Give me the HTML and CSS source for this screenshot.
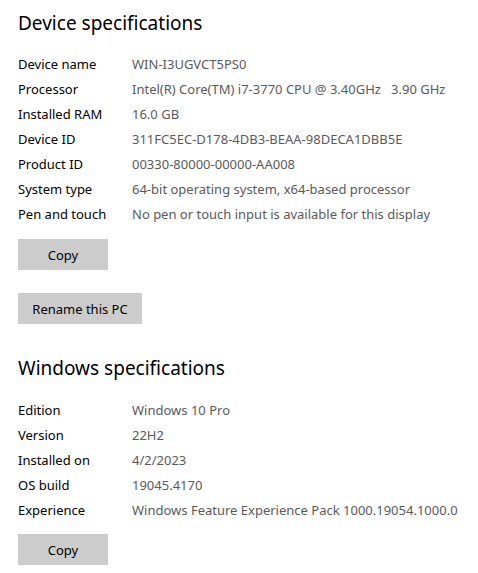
FILE: index.html
```html
<!DOCTYPE html>
<html lang="en">
<head>
  <meta charset="UTF-8">
  <title>About</title>
  <link rel="stylesheet" href="styles.css">
</head>
<body>
  <section class="spec-section">
    <h2 class="spec-title">Device specifications</h2>
    <div class="spec-list">
      <div class="spec-row"><span class="spec-label">Device name</span><span class="spec-value">WIN-I3UGVCT5PS0</span></div>
      <div class="spec-row"><span class="spec-label">Processor</span><span class="spec-value">Intel(R) Core(TM) i7-3770 CPU @ 3.40GHz &nbsp; 3.90 GHz</span></div>
      <div class="spec-row"><span class="spec-label">Installed RAM</span><span class="spec-value">16.0 GB</span></div>
      <div class="spec-row"><span class="spec-label">Device ID</span><span class="spec-value">311FC5EC-D178-4DB3-BEAA-98DECA1DBB5E</span></div>
      <div class="spec-row"><span class="spec-label">Product ID</span><span class="spec-value">00330-80000-00000-AA008</span></div>
      <div class="spec-row"><span class="spec-label">System type</span><span class="spec-value">64-bit operating system, x64-based processor</span></div>
      <div class="spec-row"><span class="spec-label">Pen and touch</span><span class="spec-value">No pen or touch input is available for this display</span></div>
    </div>
    <button class="btn btn-copy">Copy</button>
    <button class="btn btn-rename">Rename this PC</button>
  </section>

  <section class="spec-section windows">
    <h2 class="spec-title">Windows specifications</h2>
    <div class="spec-list">
      <div class="spec-row"><span class="spec-label">Edition</span><span class="spec-value">Windows 10 Pro</span></div>
      <div class="spec-row"><span class="spec-label">Version</span><span class="spec-value">22H2</span></div>
      <div class="spec-row"><span class="spec-label">Installed on</span><span class="spec-value">4/2/2023</span></div>
      <div class="spec-row"><span class="spec-label">OS build</span><span class="spec-value">19045.4170</span></div>
      <div class="spec-row"><span class="spec-label">Experience</span><span class="spec-value">Windows Feature Experience Pack 1000.19054.1000.0</span></div>
    </div>
    <button class="btn btn-copy">Copy</button>
  </section>
</body>
</html>
```

FILE: styles.css
```css
body {
  margin: 0;
  padding: 0 0 0 18px;
  background-color: white;
  color: black;
  font-family: "Noto Sans", sans-serif;
}
.spec-section {
  display: flex;
  flex-direction: column;
  align-items: flex-start;
  padding-top: 9px;
}
.spec-section.windows {
  padding-top: 30px;
}
.spec-title {
  margin: 0;
  font-size: 19px;
  font-weight: normal;
  line-height: 28px;
}
.spec-list {
  display: flex;
  flex-direction: column;
  margin-top: 14px;
}
.windows .spec-list {
  margin-top: 15px;
}
.spec-row {
  display: flex;
  height: 25px;
  align-items: center;
  font-size: 13px;
}
.spec-label {
  width: 114px;
}
.spec-value {
  color: #5a5a5a;
}
.btn {
  border: none;
  background-color: #cccccc;
  color: black;
  font-family: "Noto Sans", sans-serif;
  font-size: 13px;
  height: 31px;
  padding: 0;
}
.btn-copy {
  width: 90px;
  margin-top: 13px;
}
.windows .btn-copy {
  margin-top: 12px;
}
.btn-rename {
  width: 124px;
  margin-top: 23px;
}
```
